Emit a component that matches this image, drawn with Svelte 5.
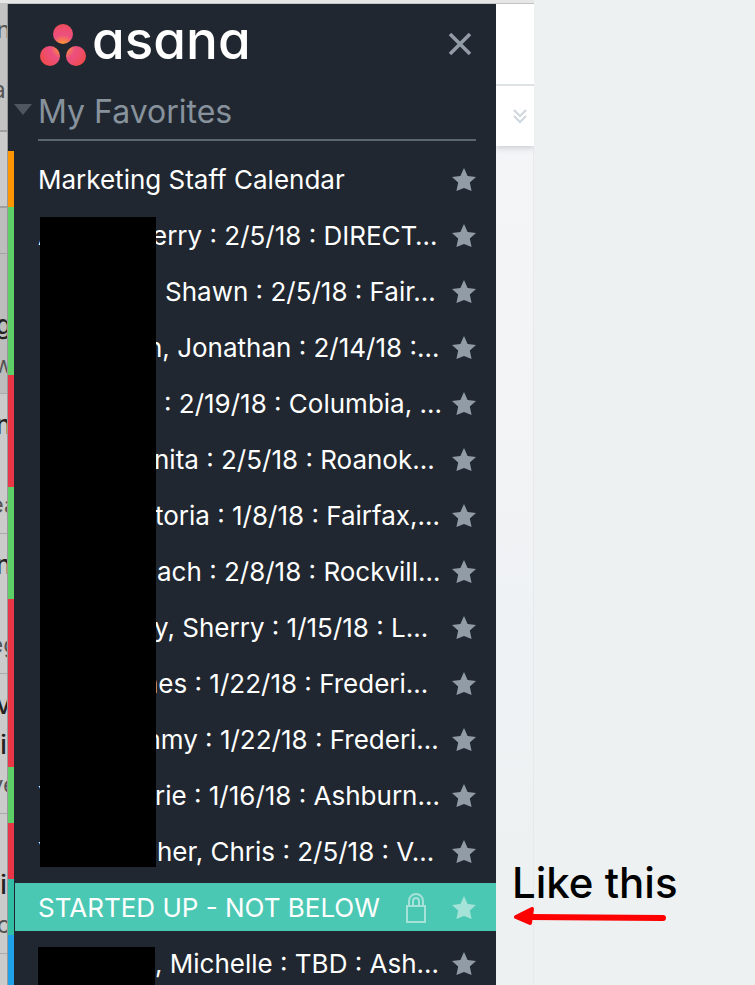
<script lang="ts">
	interface Project {
		text: string
		color: string
		initial?: string
		lead?: number
		selected?: boolean
	}

	interface Task {
		title: string[]
		meta: string
		active?: boolean
	}

	const orange = '#ff9500';
	const green = '#5dd068';
	const red = '#e83548';
	const teal = '#32bea4';
	const blue = '#1fa1ea';

	// lead is the width of the covered part of the name
	const projects: Project[] = [
		{ text: 'Marketing Staff Calendar', color: orange },
		{ text: 'erry : 2/5/18 : DIRECT…', color: green, initial: 'A', lead: 114 },
		{ text: 'Shawn : 2/5/18 : Fair…', color: green, lead: 127 },
		{ text: 'n, Jonathan : 2/14/18 :…', color: green, lead: 109 },
		{ text: ': 2/19/18 : Columbia, …', color: red, lead: 126 },
		{ text: 'nita : 2/5/18 : Roanok…', color: red, lead: 116 },
		{ text: 'toria : 1/8/18 : Fairfax,…', color: green, lead: 117 },
		{ text: 'ach : 2/8/18 : Rockvill…', color: green, lead: 119 },
		{ text: 'y, Sherry : 1/15/18 : L…', color: red, lead: 116 },
		{ text: 'nes : 1/22/18 : Frederi…', color: red, lead: 105 },
		{ text: 'mmy : 1/22/18 : Frederi…', color: red, lead: 100 },
		{ text: 'rie : 1/16/18 : Ashburn…', color: green, initial: 'Y', lead: 117 },
		{ text: 'her, Chris : 2/5/18 : V…', color: red, initial: 'Y', lead: 119 },
		{ text: 'STARTED UP - NOT BELOW', color: teal, selected: true },
		{ text: ', Michelle : TBD : Ash…', color: blue, lead: 117 }
	];

	const tasks: Task[] = [
		{ title: ['g'], meta: 'w', active: true },
		{ title: ['n', ''], meta: 'ea' },
		{ title: ['n', ''], meta: 'eg' },
		{ title: ['v', 'i'], meta: 've' },
		{ title: ['i'], meta: 'c' },
		{ title: [''], meta: '' }
	];
</script>

<main>
	<div class="window">
		<div class="chrome"></div>

		<section class="inbox">
			<div class="inbox-head">
				<span>n</span>
				<span>ar</span>
			</div>
			<div class="inbox-filter"></div>
			<div class="inbox-group"></div>
			{#each tasks as task}
				<div class="task" class:active={task.active}>
					{#each task.title as line}
						<b>{line}</b>
					{/each}
					<span>{task.meta}</span>
				</div>
			{/each}
		</section>

		<nav>
			<header>
				<a class="logo" href="/">
					<svg width="46" height="44" viewBox="0 0 46 44" aria-hidden="true">
						<defs>
							<radialGradient id="dots" gradientUnits="userSpaceOnUse" cx="23" cy="24" r="26">
								<stop offset="0" stop-color="#ff9a2e" />
								<stop offset="0.18" stop-color="#fb8b42" />
								<stop offset="0.48" stop-color="#ec4f80" />
								<stop offset="0.68" stop-color="#ee4e70" />
								<stop offset="1" stop-color="#f04a48" />
							</radialGradient>
						</defs>
						<g fill="url(#dots)">
							<circle cx="23" cy="11" r="10" />
							<circle cx="10" cy="33" r="10" />
							<circle cx="36" cy="33" r="10" />
						</g>
					</svg>
					<span>asana</span>
				</a>
				<button class="close" aria-label="Close">
					<svg width="24" height="24" viewBox="0 0 24 24">
						<path d="M2 2L22 22M22 2L2 22" stroke="#929ca6" stroke-width="3.6" />
					</svg>
				</button>
			</header>

			<h2>
				<svg width="18" height="11" viewBox="0 0 18 11" aria-hidden="true">
					<path d="M0 0H18L9 11Z" fill="#4f5660" />
				</svg>
				<span>My Favorites</span>
			</h2>

			<ul>
				{#each projects as project}
					<li class:selected={project.selected} style="border-color: {project.color}">
						<div class="row">
							<a href="/">
								{#if project.lead}
									<span class="lead" style="width: {project.lead}px">{project.initial ?? ''}</span>
								{/if}
								<span>{project.text}</span>
							</a>
							{#if project.selected}
								<svg class="lock" width="22" height="31" viewBox="0 0 22 31" aria-hidden="true">
									<g fill="none" stroke="#a5e2d8" stroke-width="2">
										<path d="M2 13H20V29H2Z" />
										<path d="M4 12V8A7 7 0 0 1 18 8V12" />
										<path d="M8 12V8A3 3 0 0 1 14 8V12" />
									</g>
								</svg>
							{/if}
							<button class="star" aria-label="Favorite">
								<svg width="24" height="24" viewBox="0 0 24 24">
									<path d="M12 0L15.6 8L24 9L17.8 14.6L19.6 23L12 20L4.4 23L6.2 14.6L0 9L8.4 8Z" fill="currentColor" />
								</svg>
							</button>
						</div>
					</li>
				{/each}
				<div class="cover names"></div>
				<div class="cover last"></div>
			</ul>
		</nav>

		<section class="detail">
			<div class="detail-top"></div>
			<div class="detail-bar">
				<svg width="14" height="15" viewBox="0 0 14 15" aria-hidden="true">
					<path d="M1 1L7 7L13 1M1 7L7 13L13 7" fill="none" stroke="#cfd6dc" stroke-width="2" />
				</svg>
			</div>
			<div class="detail-body"></div>
		</section>
	</div>

	<aside>
		<p>Like this</p>
		<svg width="156" height="20" viewBox="0 0 156 20" aria-hidden="true">
			<path d="M18 10L151 11" stroke="#fe0000" stroke-width="6" stroke-linecap="round" />
			<path d="M4 10L20 2L18 16Z" fill="#fe0000" stroke="#fe0000" stroke-width="4" stroke-linejoin="round" />
		</svg>
	</aside>
</main>

<style>
	:global(body) {
		background: #edf1f2;
	}

	main {
		display: flex;
		height: 100vh;
		overflow: hidden;
		background: #edf1f2;
		font-family: Inter, "Liberation Sans", sans-serif;
	}

	.window {
		display: grid;
		grid-template-columns: 8px 488px 38px;
		grid-template-rows: 4px 1fr;
		height: 100%;
	}

	.chrome {
		grid-column: 1 / -1;
		background: #e6e6e6;
		border-bottom: 1px solid #c4c4c4;
		box-sizing: border-box;
	}

	/* dimmed task list behind the sidebar */
	.inbox {
		overflow: hidden;
		background: #cbcbcb;
		border-right: 1px solid #999;
		color: #555;
		font-size: 24px;
		line-height: 40px;
	}

	.inbox-head {
		display: flex;
		flex-direction: column;
		align-items: center;
		gap: 20px;
		height: 128px;
		padding-top: 6px;
		box-sizing: border-box;
		background: #c3c3c3;
		border-bottom: 2px solid #9f9f9f;
	}

	.inbox-filter {
		height: 74px;
		border-bottom: 2px solid #9f9f9f;
	}

	.inbox-group {
		height: 45px;
		background: #bdbdbd;
		border-bottom: 1px solid #a3a3a3;
	}

	.task {
		display: flex;
		flex-direction: column;
		justify-content: flex-end;
		align-items: center;
		height: 140px;
		padding-bottom: 8px;
		box-sizing: border-box;
		border-bottom: 1px solid #aaa;
	}

	.task.active {
		background: #bdbdbd;
	}

	.task b {
		min-height: 40px;
		color: #222;
		font-size: 26px;
		font-weight: 500;
	}

	nav {
		overflow: hidden;
		background: #202730;
	}

	header {
		display: flex;
		justify-content: space-between;
		align-items: center;
		height: 80px;
		padding: 0 24px 0 32px;
	}

	.logo {
		display: flex;
		align-items: center;
		gap: 6px;
		padding-top: 2px;
		color: #fff;
		text-decoration: none;
	}

	.logo span {
		font-size: 53px;
		font-weight: 500;
		line-height: 64px;
		font-feature-settings: "cv11", "ss03";
		padding-bottom: 10px;
	}

	button {
		display: flex;
		padding: 0;
		border: 0;
		background: none;
		color: #929ca6;
		cursor: pointer;
	}

	h2 {
		display: flex;
		align-items: center;
		height: 57px;
		margin: 0 20px 10px 6px;
		padding: 0;
		box-sizing: border-box;
		color: #87929c;
		font-size: 32px;
		font-weight: 400;
	}

	h2 svg {
		margin-bottom: 6px;
	}

	h2 span {
		flex: 1;
		height: 100%;
		margin-left: 6px;
		box-sizing: border-box;
		line-height: 56px;
		border-bottom: 2px solid #5b6670;
	}

	ul {
		position: relative;
		margin: 0;
		padding: 0;
		list-style: none;
	}

	li {
		height: 56px;
		padding: 4px 0 4px 1px;
		box-sizing: border-box;
		border-left: 6px solid;
	}

	.row {
		display: flex;
		align-items: center;
		height: 48px;
		padding: 2px 20px 0 23px;
		box-sizing: border-box;
	}

	.row a {
		display: flex;
		flex: 1;
		color: #fff;
		font-size: 26px;
		line-height: 46px;
		text-decoration: none;
		white-space: nowrap;
	}

	.lead {
		flex: none;
	}

	.selected .row {
		background: #4bc8b4;
	}

	.selected .star {
		color: #a5e2d8;
	}

	.lock {
		margin-right: 25px;
	}

	.cover {
		position: absolute;
		background: #000;
	}

	.names {
		top: 66px;
		left: 32px;
		width: 116px;
		height: 650px;
	}

	.last {
		top: 796px;
		left: 30px;
		width: 117px;
		height: 44px;
	}

	.detail {
		display: flex;
		flex-direction: column;
	}

	.detail-top {
		height: 80px;
		background: #fff;
		border-bottom: 2px solid #dde2e5;
	}

	.detail-bar {
		display: flex;
		align-items: center;
		height: 60px;
		padding-left: 17px;
		background: #fff;
		box-shadow: 0 2px 6px #c8cccf;
		clip-path: inset(0 0 -10px 0);
	}

	.detail-body {
		flex: 1;
		border-right: 1px solid #e6eaeb;
		background: linear-gradient(#f4f5f7, #edf1f2 700px);
	}

	aside {
		display: flex;
		flex: 1;
		flex-direction: column;
		justify-content: flex-end;
		align-items: flex-start;
		margin-left: -22px;
		padding-bottom: 58px;
		z-index: 1;
	}

	p {
		margin: 0;
		color: #000;
		font-size: 42px;
		font-weight: 500;
		line-height: 48px;
		white-space: nowrap;
	}
</style>
